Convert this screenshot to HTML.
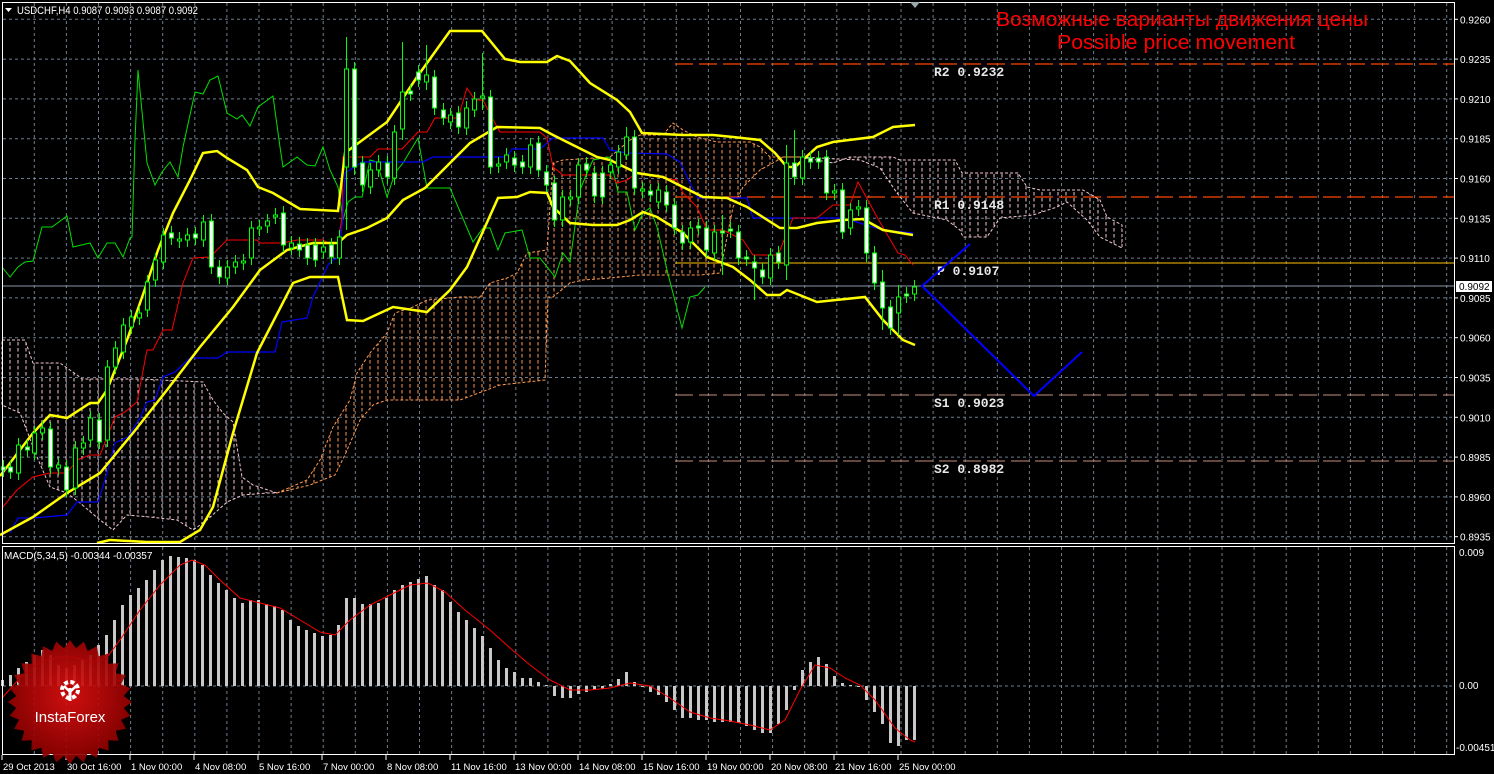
<!DOCTYPE html>
<html><head><meta charset="utf-8"><style>
html,body{margin:0;padding:0;background:#000;width:1494px;height:774px;overflow:hidden}
svg{display:block}
text{font-family:"Liberation Sans",sans-serif}
</style></head><body>
<svg id="s" width="1494" height="774" xmlns="http://www.w3.org/2000/svg">
<defs>
<pattern id="hp" width="8" height="6" patternUnits="userSpaceOnUse"><line x1="2" y1="0" x2="2" y2="3.5" stroke="#f2c8d0" stroke-width="1"/></pattern>
<pattern id="ho" width="8" height="6" patternUnits="userSpaceOnUse"><line x1="2" y1="0" x2="2" y2="3.5" stroke="#ff9a50" stroke-width="1"/></pattern>
<radialGradient id="lg" cx="50%" cy="45%" r="55%"><stop offset="0" stop-color="#e01010"/><stop offset="1" stop-color="#8a0000"/></radialGradient>
</defs>
<rect width="1494" height="774" fill="#000"/>
<g id="grid"></g>
<g id="cloud"></g>
<g id="lines"></g>
<g id="candles"></g>
<g id="macd"></g>
<rect x="2.5" y="2.5" width="1452" height="541" fill="none" stroke="#fff" stroke-width="1"/>
<rect x="2.5" y="546.5" width="1452" height="208" fill="none" stroke="#fff" stroke-width="1"/>
<polygon points="910,2 920,2 915,8" fill="#9aa"/>
<polygon points="5,8 12,8 8.5,12" fill="#fff"/>
<text x="17" y="14" font-size="11" fill="#fff" textLength="181" lengthAdjust="spacingAndGlyphs">USDCHF,H4  0.9087 0.9093 0.9087 0.9092</text>
<text x="4" y="559" font-size="10" fill="#fff">MACD(5,34,5) -0.00344 -0.00357</text>
<text x="996" y="26" font-size="20" fill="#f00" textLength="372" lengthAdjust="spacingAndGlyphs">Возможные варианты движения цены</text>
<text x="1057" y="49" font-size="20" fill="#f00" textLength="238" lengthAdjust="spacingAndGlyphs">Possible price movement</text>
<g font-size="13" font-weight="bold" fill="#e8e8e8">
<text x="934" y="76" style="font-family:'Liberation Mono',monospace">R2 0.9232</text>
<text x="934" y="209" style="font-family:'Liberation Mono',monospace">R1 0.9148</text>
<text x="937" y="275" style="font-family:'Liberation Mono',monospace">P 0.9107</text>
<text x="934" y="407" style="font-family:'Liberation Mono',monospace">S1 0.9023</text>
<text x="934" y="473" style="font-family:'Liberation Mono',monospace">S2 0.8982</text>
</g>
<polyline points="970,244 922,286 1034,396 1082,352" fill="none" stroke="#0000ff" stroke-width="2"/>
<g id="axis" font-size="10" fill="#fff"></g>
<rect x="1456" y="281" width="36" height="11" fill="#fff"/>
<text x="1459" y="290" font-size="10" fill="#000">0.9092</text>
<g id="logo"></g>
</svg>
<script>
var NS="http://www.w3.org/2000/svg",S=document.getElementById('s');
function el(p,t,a){var e=document.createElementNS(NS,t);for(var k in a)e.setAttribute(k,a[k]);document.getElementById(p).appendChild(e);return e;}
function pl(p,pts,c,w,extra){var a={points:pts.map(function(q){return q.join(',')}).join(' '),fill:'none',stroke:c,'stroke-width':w};for(var k in extra)a[k]=extra[k];return el(p,'polyline',a);}
for(var x=34.3;x<1454;x+=32.1){el('grid','line',{x1:x,y1:3,x2:x,y2:543,stroke:'#6d7d8d','stroke-dasharray':'3,3'});el('grid','line',{x1:x,y1:547,x2:x,y2:754,stroke:'#6d7d8d','stroke-dasharray':'3,3'});}
for(var i=0;i<14;i++){var y=19.3+39.8*i;el('grid','line',{x1:3,y1:y,x2:1454,y2:y,stroke:'#6d7d8d','stroke-dasharray':'3,3'});}
el('grid','line',{x1:3,y1:686,x2:1454,y2:686,stroke:'#6d7d8d','stroke-dasharray':'3,3'});
el('grid','line',{x1:675,y1:64,x2:1454,y2:64,stroke:'#ff4500','stroke-dasharray':'18,6','stroke-width':1.3});
el('grid','line',{x1:675,y1:197,x2:1454,y2:197,stroke:'#ff4500','stroke-dasharray':'18,6','stroke-width':1.3});
el('grid','line',{x1:675,y1:263,x2:1454,y2:263,stroke:'#ffc000','stroke-width':1});
el('grid','line',{x1:675,y1:395,x2:1454,y2:395,stroke:'#c89080','stroke-dasharray':'18,6'});
el('grid','line',{x1:675,y1:461,x2:1454,y2:461,stroke:'#c89080','stroke-dasharray':'18,6'});
el('grid','line',{x1:3,y1:286,x2:1454,y2:286,stroke:'#8899aa'});
var pinkL=[[2,340],[25,340],[33,363],[60,363],[77,375],[82,379],[140,379],[203,382],[213,400],[223,413],[233,422],[242,477],[253,485],[277,493],[267,493],[243,495],[227,502],[207,520],[193,530],[177,520],[150,517],[127,515],[113,530],[100,520],[80,503],[67,493],[50,487],[37,457],[20,413],[2,405]];
var orng=[[277,493],[307,480],[320,460],[333,427],[350,400],[357,373],[370,353],[387,333],[395,313],[413,307],[427,300],[460,297],[480,297],[490,283],[507,278],[517,273],[527,253],[547,250],[553,163],[563,160],[610,157],[630,140],[640,135],[663,135],[673,123],[683,130],[697,137],[717,142],[750,142],[760,147],[770,157],[800,157],[783,157],[773,163],[760,170],[743,187],[733,207],[720,273],[700,275],[640,275],[610,278],[583,280],[570,283],[553,297],[548,297],[545,380],[500,385],[460,400],[387,400],[373,405],[360,420],[345,455],[335,475],[310,485]];
var pinkR=[[800,157],[833,163],[850,157],[893,157],[900,160],[955,160],[962,173],[1018,173],[1027,187],[1040,190],[1083,190],[1100,200],[1107,217],[1122,225],[1122,248],[1100,237],[1087,220],[1067,202],[1057,207],[1033,215],[1000,218],[987,237],[963,237],[960,230],[947,220],[913,213],[897,193],[880,168],[860,160]];
function poly(pts,fill,st){el('cloud','polygon',{points:pts.map(function(q){return q.join(',')}).join(' '),fill:fill,stroke:st,'stroke-dasharray':'3,2','stroke-width':1});}
poly(pinkL,'url(#hp)','#f2c8d0');poly(orng,'url(#ho)','#ff9a50');poly(pinkR,'url(#hp)','#f2c8d0');
var Y1=[[0,476],[33,433],[50,415],[67,418],[90,403],[98,403],[107,390],[127,340],[147,283],[158,250],[173,213],[190,180],[203,153],[217,151],[227,158],[247,170],[258,187],[273,193],[300,209],[338,211],[345,153],[353,147],[387,122],[417,77],[450,31],[482,31],[505,59],[520,62],[547,62],[557,56],[570,61],[590,83],[617,100],[630,112],[642,133],[683,135],[713,135],[733,137],[760,140],[775,153],[787,167],[795,167],[817,147],[833,142],[873,137],[893,127],[915,125]];
var Y2=[[0,535],[33,517],[67,493],[100,473],[133,433],[167,390],[200,347],[233,307],[260,270],[287,250],[313,243],[338,243],[347,235],[367,228],[387,218],[403,200],[425,188],[450,163],[470,143],[497,127],[540,128],[553,135],[577,147],[597,157],[610,160],[637,173],[663,177],[683,187],[703,197],[727,198],[747,207],[780,228],[797,228],[817,223],[843,220],[863,219],[883,230],[913,235]];
var Y3=[[97,543],[110,540],[147,542],[180,542],[200,530],[213,507],[233,433],[257,353],[293,283],[310,277],[338,277],[347,320],[363,321],[393,307],[427,312],[450,290],[467,267],[498,198],[517,197],[530,192],[547,193],[553,207],[570,223],[593,225],[617,225],[630,220],[643,212],[657,217],[683,233],[707,257],[733,267],[750,280],[767,295],[780,295],[787,290],[817,302],[865,297],[883,320],[903,340],[915,345]];
var RED=[[2,508],[17,490],[33,477],[50,473],[67,473],[77,460],[90,455],[100,455],[115,417],[125,412],[137,402],[147,350],[153,350],[163,330],[172,330],[183,283],[193,258],[210,257],[227,240],[257,240],[260,243],[283,243],[297,240],[323,240],[328,243],[338,243],[342,217],[343,157],[370,157],[378,149],[402,149],[418,132],[427,132],[435,118],[458,118],[467,88],[475,100],[483,100],[497,127],[500,132],[540,132],[547,138],[553,167],[563,175],[610,175],[617,183],[627,180],[637,173],[657,177],[677,180],[683,193],[697,207],[707,230],[723,230],[743,240],[753,255],[778,255],[793,218],[817,218],[833,205],[850,205],[858,182],[877,217],[898,253],[905,255],[913,265]];
var BLUE=[[10,533],[18,518],[33,518],[67,515],[77,502],[98,502],[107,473],[115,443],[128,437],[140,418],[147,402],[155,400],[163,377],[175,372],[190,358],[218,358],[227,352],[275,352],[282,322],[307,318],[313,297],[322,278],[328,265],[333,260],[338,258],[343,217],[345,173],[362,162],[423,162],[433,157],[507,157],[512,149],[540,149],[553,138],[603,138],[610,150],[627,153],[667,154],[680,162],[690,183],[698,198],[747,198],[753,218],[843,218],[883,230],[913,233]];
var GRN=[[2,267],[10,277],[18,267],[25,262],[33,261],[42,227],[52,227],[67,216],[73,247],[90,243],[98,258],[107,243],[115,243],[123,257],[130,238],[132,237],[135,140],[138,70],[147,163],[155,185],[162,172],[170,162],[178,177],[183,147],[195,92],[203,94],[210,80],[218,76],[227,113],[237,119],[242,115],[250,126],[258,107],[273,96],[280,147],[283,167],[297,157],[307,165],[315,166],[323,147],[330,170],[338,187],[343,220],[348,202],[355,197],[362,197],[370,160],[377,162],[387,197],[395,173],[403,163],[418,138],[427,188],[435,188],[450,188],[473,242],[483,228],[490,228],[498,250],[505,233],[522,230],[530,258],[540,258],[555,277],[563,253],[570,262],[580,190],[587,173],[593,160],[603,158],[610,157],[618,192],[627,192],[635,230],[643,213],[650,208],[657,227],[667,270],[682,328],[690,297],[698,295],[705,287]];
pl('lines',GRN,'#00e000',1);pl('lines',BLUE,'#0000ff',1.2);pl('lines',RED,'#ff0000',1);
pl('lines',Y1,'#ffff00',2.5);pl('lines',Y2,'#ffff00',2.5);pl('lines',Y3,'#ffff00',2.5);
var B=[[3,467,470,'w'],[10,467,472,'w'],[18,445,473,'b'],[27,447,450,'w'],[34,433,453,'b'],[42,428,433,'b'],[50,429,467,'w'],[58,465,468,'b'],[66,467,490,'w'],[75,448,488,'b'],[83,443,448,'b'],[90,418,440,'b'],[99,420,442,'w'],[107,367,440,'b'],[115,348,367,'b'],[123,325,352,'b'],[131,317,327,'b'],[139,313,318,'b'],[147,282,310,'b'],[155,260,280,'b'],[163,235,262,'b'],[171,233,238,'w'],[179,239,241,'b'],[187,235,240,'b'],[195,234,238,'w'],[203,222,240,'b'],[211,221,267,'w'],[219,267,277,'w'],[227,267,278,'b'],[235,262,267,'b'],[243,261,263,'b'],[251,228,258,'b'],[259,227,229,'b'],[267,221,226,'b'],[275,215,217,'b'],[283,213,245,'w'],[291,243,248,'b'],[299,244,250,'w'],[307,245,258,'w'],[315,245,260,'w'],[323,247,252,'b'],[331,245,257,'w'],[339,237,258,'b'],[346,69,167,'b',37,230],[354,69,167,'w',62,175],[362,163,185,'w'],[370,170,187,'b'],[378,162,170,'b'],[387,163,177,'w'],[394,132,178,'b'],[402,92,129,'b',42,140],[410,91,94,'w'],[418,72,80,'w'],[426,75,82,'b',45,90],[434,77,108,'w'],[443,110,118,'w'],[450,115,122,'b'],[458,113,127,'w'],[466,108,128,'b'],[474,99,110,'b'],[482,96,98,'b',53,110],[490,97,167,'w'],[498,164,166,'b'],[506,155,162,'b'],[514,158,165,'w'],[522,162,167,'w'],[530,145,167,'b'],[538,143,170,'w'],[546,172,185,'w'],[554,183,220,'w'],[562,197,220,'b'],[570,197,199,'b'],[578,165,197,'b'],[586,164,170,'w'],[594,173,196,'w'],[602,173,197,'w'],[610,165,172,'b'],[618,152,167,'b'],[626,137,155,'b',127,160],[634,137,188,'w'],[642,189,191,'b'],[650,191,195,'w'],[658,190,202,'b'],[666,192,205,'w'],[674,205,228,'w'],[682,232,243,'w'],[690,228,242,'b'],[698,226,228,'w'],[706,228,250,'w'],[714,232,253,'b'],[722,231,233,'w',215,275],[730,229,231,'w'],[738,232,258,'w'],[746,257,259,'w'],[754,262,268,'w',255,300],[762,270,277,'w'],[770,255,278,'b'],[778,253,262,'w'],[786,163,265,'b',145,280],[794,163,177,'w',130,185],[802,157,178,'b'],[810,158,162,'w'],[818,158,162,'w'],[826,157,193,'w'],[834,191,193,'b'],[842,190,232,'w'],[850,210,228,'b'],[858,207,209,'b'],[866,208,253,'w',200,262],[874,253,283,'w'],[882,282,308,'w',270,330],[890,307,328,'w'],[898,297,313,'b',285,335],[906,294,296,'w'],[914,287,294,'b']];
B.forEach(function(b){var hi=b[4]||b[1]-7,lo=b[5]||b[2]+7;
el('candles','line',{x1:b[0]+.5,y1:hi,x2:b[0]+.5,y2:lo,stroke:'#00ff00'});
el('candles','rect',{x:b[0]-1.5,y:b[1],width:4,height:Math.max(1,b[2]-b[1]),fill:b[3]=='w'?'#fff':'#000',stroke:'#00ff00','stroke-width':1});});
var H=[680,675,668,662,655,650,655,665,668,665,660,655,645,635,620,605,595,588,580,570,560,556,557,558,560,565,575,583,590,598,603,600,600,604,606,610,620,626,630,633,636,635,625,598,598,604,604,603,598,590,585,582,579,576,585,590,602,612,620,628,636,648,660,668,672,678,678,682,685,696,698,698,694,692,690,689,684,679,672,682,687,692,695,702,710,718,718,720,720,722,722,722,723,726,730,733,733,724,710,690,670,662,657,664,676,683,685,686,700,712,724,743,746,740,740];
H.forEach(function(h,i){var x=2+8*i;var t=Math.min(h,686),b=Math.max(h,686);el('macd','rect',{x:x-1,y:t,width:3,height:Math.max(1,b-t),fill:'#c8c8c8'});});
pl('macd',[[2,698],[20,678],[40,662],[58,657],[75,657],[90,662],[105,660],[120,640],[140,610],[160,585],[180,565],[192,560],[205,565],[220,580],[240,598],[260,603],[280,608],[300,620],[320,632],[335,635],[350,620],[370,605],[390,595],[410,585],[428,583],[445,592],[465,610],[490,630],[510,648],[530,665],[550,680],[570,690],[590,690],[610,688],[630,683],[650,686],[670,698],[690,712],[710,718],[730,721],[750,725],[770,730],[785,720],[800,690],[815,665],[830,668],[845,678],[860,685],[875,700],[895,728],[910,740],[915,742]],'#ff0000',1);
var P=['0.9260','0.9235','0.9210','0.9185','0.9160','0.9135','0.9110','0.9085','0.9060','0.9035','0.9010','0.8985','0.8960','0.8935'];
P.forEach(function(p,i){var y=19.3+39.8*i;el('axis','line',{x1:1454,y1:y,x2:1458,y2:y,stroke:'#fff'});var t=el('axis','text',{x:1460,y:y+4});t.textContent=p;});
[['0.009',556],['0.00',689],['-0.00451',751]].forEach(function(a){var t=el('axis','text',{x:a[0][0]=='-'?1456:1459,y:a[1]});t.textContent=a[0];});
var D=['29 Oct 2013','30 Oct 16:00','1 Nov 00:00','4 Nov 08:00','5 Nov 16:00','7 Nov 00:00','8 Nov 08:00','11 Nov 16:00','13 Nov 00:00','14 Nov 08:00','15 Nov 16:00','19 Nov 00:00','20 Nov 08:00','21 Nov 16:00','25 Nov 00:00'];
D.forEach(function(d,i){var x=2+64*i;el('axis','line',{x1:x,y1:755,x2:x,y2:760,stroke:'#fff'});var t=el('axis','text',{x:x+1,y:770,'font-size':'9.5'});t.textContent=d;});
var cx=70,cy=702,pts=[];for(var k=0;k<56;k++){var r=k%2?54:62,a=k*Math.PI/28;pts.push((cx+r*Math.cos(a)).toFixed(1)+','+(cy+r*Math.sin(a)).toFixed(1));}
el('logo','polygon',{points:pts.join(' '),fill:'url(#lg)',opacity:'0.92'});
el('logo','circle',{cx:70,cy:690,r:8,fill:'none',stroke:'#fff','stroke-width':4,'stroke-dasharray':'4,2.3'});
el('logo','circle',{cx:70,cy:690,r:5,fill:'#b00'});
el('logo','rect',{x:68.5,y:688,width:3,height:13,fill:'#fff'});
el('logo','path',{d:'M64,686 L70,692 L76,686',fill:'none',stroke:'#fff','stroke-width':2.5});
var lt=el('logo','text',{x:70,y:722,'font-size':'15','fill':'#fff','text-anchor':'middle'});lt.textContent='InstaForex';
</script>
</body></html>
